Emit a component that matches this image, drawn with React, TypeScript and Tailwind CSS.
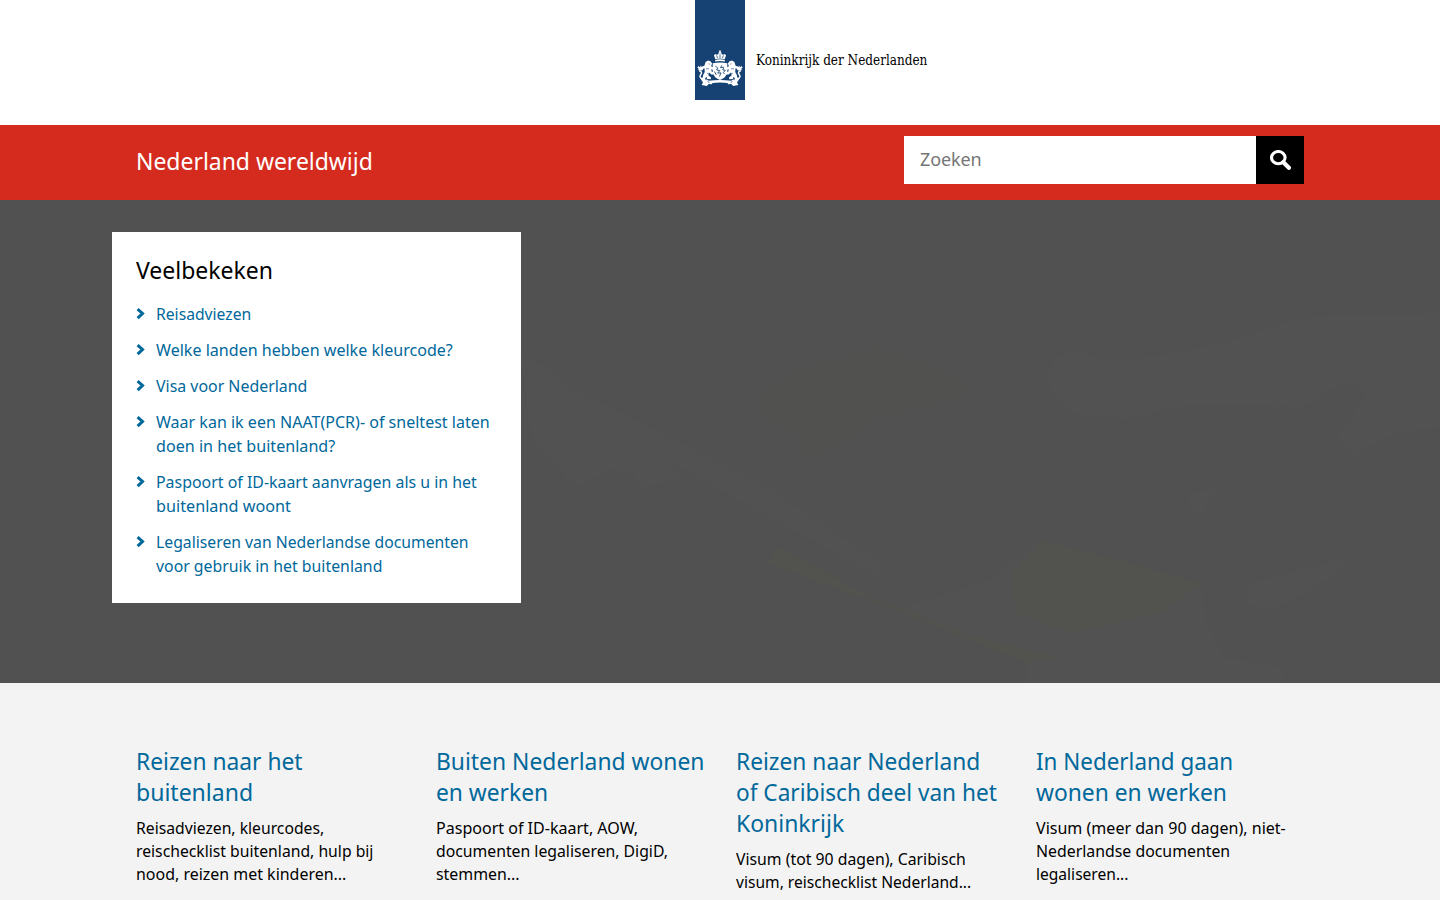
import { useLayoutEffect, useRef, useState } from "react";

/** One line of text, condensed or widened horizontally to the given width. */
function Line({ w, children }: { w: number; children: string }) {
  const ref = useRef<HTMLSpanElement>(null);
  const [scale, setScale] = useState(1);
  useLayoutEffect(() => {
    if (ref.current) setScale(w / ref.current.offsetWidth);
  }, [w]);
  return (
    <span className="block whitespace-nowrap">
      <span ref={ref} className="inline-block origin-left" style={{ transform: `scaleX(${scale})` }}>
        {children}
      </span>
    </span>
  );
}

type TextLine = [string, number];

const links: TextLine[][] = [
  [["Reisadviezen", 95.5]],
  [["Welke landen hebben welke kleurcode?", 296.5]],
  [["Visa voor Nederland", 151]],
  [["Waar kan ik een NAAT(PCR)- of sneltest laten", 334], ["doen in het buitenland?", 179]],
  [["Paspoort of ID-kaart aanvragen als u in het", 321], ["buitenland woont", 134.5]],
  [["Legaliseren van Nederlandse documenten", 313], ["voor gebruik in het buitenland", 226]],
];

const themes: { title: TextLine[]; text: TextLine[] }[] = [
  {
    title: [["Reizen naar het", 167], ["buitenland", 117]],
    text: [["Reisadviezen, kleurcodes,", 188.5], ["reischecklist buitenland, hulp bij", 237.5], ["nood, reizen met kinderen...", 210.5]],
  },
  {
    title: [["Buiten Nederland wonen", 268.5], ["en werken", 112]],
    text: [["Paspoort of ID-kaart, AOW,", 202], ["documenten legaliseren, DigiD,", 232.5], ["stemmen...", 83.5]],
  },
  {
    title: [["Reizen naar Nederland", 244.5], ["of Caribisch deel van het", 261], ["Koninkrijk", 108]],
    text: [["Visum (tot 90 dagen), Caribisch", 230], ["visum, reischecklist Nederland...", 235.5]],
  },
  {
    title: [["In Nederland gaan", 197], ["wonen en werken", 191]],
    text: [["Visum (meer dan 90 dagen), niet-", 250], ["Nederlandse documenten", 194], ["legaliseren...", 92]],
  },
];

function Lion() {
  return (
    <g>
      <path d="M9.2 14.6l.8-2.7 2.6-1.3 2.8.8 1.3 2.2-.9 2.6 3 1.8 1.7-1.2.8 1.3-2.2 2.2-3.2-1 .4 2.2 2.8 1.3.2 1.8-3.4-.2-2.2-2-.9 2.9 2.8 2.2-.2 1.8-3.7-.3-1-2.2-1.3 2 1 2-3.8.1-1.8-1.8 2-1.2.8-3.2 1.6-2.8-.4-3.6-2.4.7-1.8-1.6 1.5-.9 2.4-.4z" />
      <path d="M7 28.5C3.4 28.4 3.8 25.6 5.2 24.2c1.3-1.3.6-3.2-1.8-3" fill="none" stroke="currentColor" strokeWidth="1.5" />
      <path d="M2.8 16l1.8 1.8-.1-2.2 1.8 1.8 1.7-.5-.9 3-2.2.9-3.3-.8 1.6-.8-1.8-1.6z" />
      <path d="M13 13.8l1.4.4M10.5 19l3-.4M11.5 23l2 .8" stroke="#154273" strokeWidth=".6" />
    </g>
  );
}

function Crest() {
  return (
    <svg viewBox="-1 0 52 38" preserveAspectRatio="none" className="h-[38px] w-[50px] text-white" fill="currentColor" aria-hidden="true">
      <circle cx="25" cy="1.2" r=".9" />
      <path d="M24.5 1.2h1v3h-1zM23.6 2h2.8v.8h-2.8z" />
      <path d="M20.2 9.3 18.7 5.2l1.6-1.1 1.7.8 1.3-1.4L25 3.3l1.7.2L28 4.9l1.7-.8 1.6 1.1-1.5 4.1-4.8-.8zM20 10.1q5-1.5 10 0v1.4q-5-1-10 0z" />
      <path d="M21.5 5.4l1 2.8M28.5 5.4l-1 2.8M25 4.4v3.6" stroke="#154273" strokeWidth=".8" />
      <path d="M17.4 13.2q7.6-1.4 15.2 0v8.3q-.5 5.9-7.6 8.5-7.1-2.6-7.6-8.5z" />
      <path d="M20.2 16.2l2.4 1.6-1 2.2 3.2.5-2.2 2.6 3.5-.2-1.7 3.6M26.8 15.4l-1.2 2.3 3.5-.5-1.2 2.7 2.8.2-2.2 2.4 1 1.5M19.3 21.6l1.8 3.3" fill="none" stroke="#154273" strokeWidth=".9" />
      <Lion />
      <g transform="translate(50 0) scale(-1 1)">
        <Lion />
      </g>
      <path d="M5.8 30.2l5.6-.6 1.9 1.2q11.7-1.8 23.4 0l1.9-1.2 5.6.6-1.5 2.2 1.4 2.6-5.4 1-2-1.9-3.3.1-.5-1.3q-7.9-.8-15.8 0l-.5 1.3-3.3-.1-2 1.9-5.4-1 1.4-2.6z" />
      <path d="M12 31.2l2 1.6M38 31.2l-2 1.6" stroke="#154273" strokeWidth=".7" />
    </svg>
  );
}

export default function App() {
  return (
    <div className="flex h-[900px] w-full flex-col overflow-hidden bg-white font-['Noto_Sans','Open_Sans',sans-serif] text-black">
      <header className="flex h-[125px] shrink-0 justify-center">
        <div className="flex w-[50px] items-start">
          <div className="flex h-[100px] w-[50px] shrink-0 items-end bg-[#154273] pb-3">
            <Crest />
          </div>
          <div className="ml-[11px] mt-[50px] shrink-0 font-['DejaVu_Serif_Condensed','DejaVu_Serif',serif] text-[14px] leading-5">
            <Line w={171.5}>Koninkrijk der Nederlanden</Line>
          </div>
        </div>
      </header>

      <div className="h-[75px] shrink-0 bg-[#d52b1e] px-[136px]">
        <div className="flex items-start justify-between pt-[11px]">
          <div className="pt-[9px] text-2xl leading-8 text-white">
            <Line w={237}>Nederland wereldwijd</Line>
          </div>
          <form className="flex h-12 w-[400px]">
            <input
              type="text"
              placeholder="Zoeken"
              className="w-[352px] bg-white px-4 pb-0.5 text-[18px] tracking-[-0.1px] outline-none placeholder:text-[#757575]"
            />
            <button type="button" aria-label="Zoeken" className="flex h-12 w-12 items-center justify-center bg-black pl-0.5">
              <svg viewBox="0 0 22 20" className="h-5 w-[22px]" fill="none" stroke="white" aria-hidden="true">
                <ellipse cx="8.3" cy="7.6" rx="6.8" ry="6.1" strokeWidth="3.1" />
                <path d="M13.3 12.2L18.9 17.8" strokeWidth="4.2" strokeLinecap="round" />
              </svg>
            </button>
          </form>
        </div>
      </div>

      <main className="relative h-[483px] shrink-0 bg-[#515151] px-28 pt-8">
        <svg className="absolute inset-0 h-full w-full" viewBox="0 0 1440 483" aria-hidden="true">
          <g fill="#525252">
            <path d="M1048 177c0-16 10-26 35-24 20 6 36 7 53 5 34-4 64-10 88-16 40-12 60-22 88-25 40-6 60 0 128-4v115c-50 2-60 14-87 29l-17-17 29-43q-4-14-18-14c-20 4-30 22-52 24q-60-4-118 0c-20 4-30 12-58 12-60-2-67-18-71-42z" />
            <path d="M520 155q35 12 53 35l64 30 135 70 115 77-9 10-123-67-82-47 8 17-38 8-12-15-23-3-26 17-14-7-36-40z" />
            <path d="M901 408l88-28 53-40 88 23 71 20 6 40 17 34 59 10v16h-257v-26zM1248 383l99-26-5 13-42 27-35 16-17-10zM1189 293l29-5-20 32q-10-8-9-27z" />
          </g>
          <path d="M778 347l100 53 23 8 80 30 80 20-35 5-130-53-130-47zM1010 375l32-35 88 23 71 20-40 30-90 20-55-20z" fill="#52524f" opacity=".8" />
          <path d="M755 200l47-33 76-20 47 16 44 24-15 13-82 20-18 20-49 18-9-25-30-10z" fill="#525250" opacity=".6" />
        </svg>
        <section className="relative h-[371px] w-[409px] bg-white px-6 pt-[22px]">
          <h2 className="text-2xl leading-8">
            <Line w={137}>Veelbekeken</Line>
          </h2>
          <ul className="mt-4 flex flex-col gap-3 text-[16.75px] leading-6 text-[#01689b]">
            {links.map((lines) => (
              <li key={lines[0][0]} className="flex">
                <svg viewBox="0 0 9 12" className="mt-1.5 mr-[11px] h-3 w-[9px] shrink-0" fill="none" stroke="currentColor" aria-hidden="true">
                  <path d="M1.6 1.1L6.5 5.5l-4.9 4.6" strokeWidth="3" />
                </svg>
                <a href="#">
                  {lines.map(([text, w]) => (
                    <Line key={text} w={w}>{text}</Line>
                  ))}
                </a>
              </li>
            ))}
          </ul>
        </section>
      </main>

      <section className="flex flex-1 items-start bg-[#f3f3f3] px-[136px] pt-[62px]">
        {themes.map(({ title, text }) => (
          <article key={title[0][0]} className="w-[300px] shrink-0">
            <h2 className="text-2xl leading-[31px] text-[#01689b]">
              {title.map(([line, w]) => (
                <Line key={line} w={w}>{line}</Line>
              ))}
            </h2>
            <div className="mt-[9px] text-[16.75px] leading-[23px]">
              {text.map(([line, w]) => (
                <Line key={line} w={w}>{line}</Line>
              ))}
            </div>
          </article>
        ))}
      </section>
    </div>
  );
}
